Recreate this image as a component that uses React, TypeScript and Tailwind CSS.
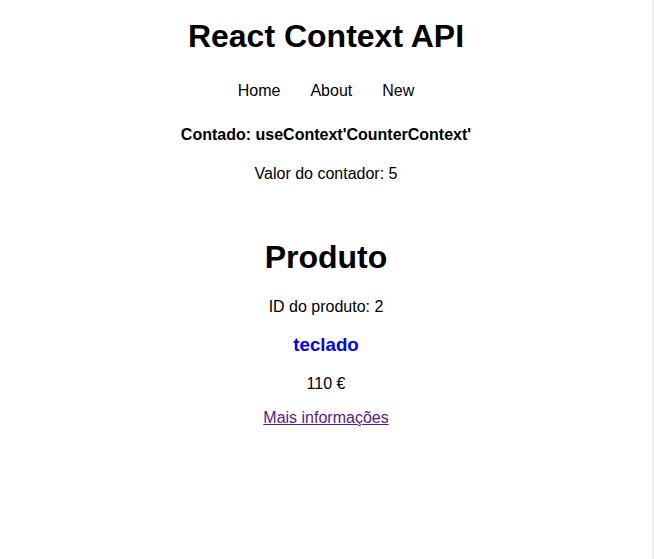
export default function App() {
  return (
    <div className="flex min-h-[559px] bg-white font-['Liberation_Sans',Arial,sans-serif] text-black">
      <main className="flex-1 text-center">
        <h1 className="pt-[18px] text-[32px] font-bold leading-[37px]">React Context API</h1>

        <nav className="mt-[27px] flex justify-center gap-[30px] text-[16px] leading-[18px]">
          <a href="#">Home</a>
          <a href="#">About</a>
          <a href="#">New</a>
        </nav>

        <h4 className="mt-[26px] text-[16px] font-bold leading-[18px]">
          Contado: useContext'CounterContext'
        </h4>
        <p className="mt-[21px] text-[16px] leading-[18px]">Valor do contador: 5</p>

        <h2 className="mt-[56px] text-[32px] font-bold leading-[37px]">Produto</h2>
        <p className="mt-[22px] text-[16px] leading-[18px]">ID do produto: 2</p>
        <h3 className="mt-[18px] text-[18.72px] font-bold leading-[22px] text-[#0000ff]">teclado</h3>
        <p className="mt-[19px] text-[16px] leading-[18px]">110 €</p>
        <p className="mt-[16px] text-[16px] leading-[18px]">
          <a href="#" className="text-[#551a8b] underline">
            Mais informações
          </a>
        </p>
      </main>
      <div className="w-[2px] shrink-0 bg-[#f0f0f0]" />
    </div>
  );
}
